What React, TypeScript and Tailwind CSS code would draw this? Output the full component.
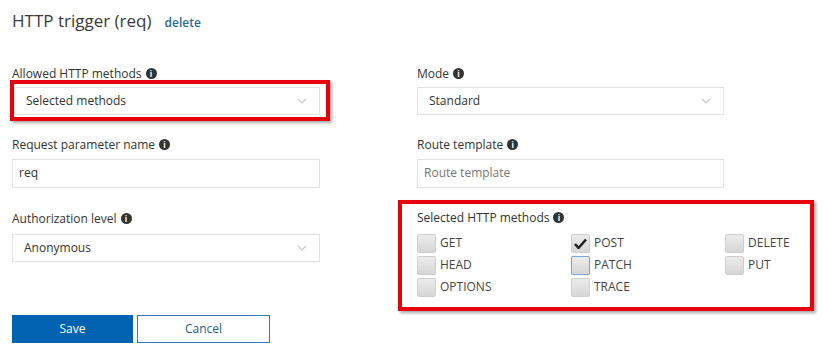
import React from "react";

const FONT = { fontFamily: '"Open Sans", "Noto Sans", "Liberation Sans", sans-serif' };

function Info() {
  return (
    <span className="ml-1 inline-flex h-[11px] w-[11px] items-center justify-center rounded-full bg-[#333] text-[8px] font-bold leading-none text-white">
      i
    </span>
  );
}

function Label({ children }: { children: React.ReactNode }) {
  return (
    <div className="flex h-4 items-center text-[12px] text-[#333]">
      {children}
      <Info />
    </div>
  );
}

function Chevron() {
  return (
    <svg width={10} height={6} viewBox="0 0 10 6" fill="none" stroke="#c8c8c8" strokeWidth={1.2}>
      <path d="M1 1l4 4 4-4" />
    </svg>
  );
}

function Select({ value }: { value: string }) {
  return (
    <div className="flex h-[28px] items-center justify-between border border-[#e3e3e3] bg-white pl-[11px] pr-[12px] text-[12px] text-[#333]">
      <span>{value}</span>
      <Chevron />
    </div>
  );
}

function TextInput({ value, placeholder }: { value?: string; placeholder?: string }) {
  return (
    <div className="flex h-[29px] items-center border border-[#e3e3e3] bg-white px-[6px] text-[12px]">
      {value ? <span className="text-[#333]">{value}</span> : <span className="text-[#777]">{placeholder}</span>}
    </div>
  );
}

function Check({ label, checked, focus }: { label: string; checked?: boolean; focus?: boolean }) {
  return (
    <div className="flex h-[19px] items-center">
      <span
        className={
          "flex h-[19px] w-[19px] items-center justify-center rounded-[2px] border bg-gradient-to-b from-[#ececec] to-[#d6d6d6] " +
          (focus ? "border-[#7fa5d8] shadow-[0_0_1px_#7fa5d8]" : "border-[#cfcfcf]")
        }
      >
        {checked && (
          <svg width={13} height={11} viewBox="0 0 13 11">
            <path d="M1 6l3.5 4L12 1.5" fill="none" stroke="#222" strokeWidth={2.6} strokeLinejoin="round" />
          </svg>
        )}
      </span>
      <span className="ml-[4px] text-[12px] text-[#444]">{label}</span>
    </div>
  );
}

export default function App() {
  return (
    <div className="relative h-[352px] w-[828px] overflow-hidden bg-white" style={FONT}>
      <div className="flex items-baseline pl-[12px] pt-[8px]">
        <span className="text-[17px] text-[#3a3a3a]">HTTP trigger (req)</span>
        <span className="ml-[13px] text-[12px] font-semibold text-[#2a6a96]">delete</span>
      </div>

      <div className="mt-[32px] flex pl-[12px]">
        <div className="flex w-[308px] flex-col">
          <Label>Allowed HTTP methods</Label>
          <div className="mt-[5px] pl-[2px]">
            <Select value="Selected methods" />
          </div>
          <div className="mt-[22px]">
            <Label>Request parameter name</Label>
          </div>
          <div className="mt-[6px]">
            <TextInput value="req" />
          </div>
          <div className="mt-[23px]">
            <Label>Authorization level</Label>
          </div>
          <div className="mt-[7px]">
            <Select value="Anonymous" />
          </div>
          <div className="mt-[53px] flex gap-[4px]">
            <button className="h-[28px] w-[121px] bg-[#0063b1] text-[12px] text-white">Save</button>
            <button className="h-[28px] w-[133px] border border-[#3b78b5] bg-white text-[12px] text-[#1f5a8c]">
              Cancel
            </button>
          </div>
        </div>

        <div className="ml-[97px] flex w-[307px] flex-col">
          <Label>Mode</Label>
          <div className="mt-[5px]">
            <Select value="Standard" />
          </div>
          <div className="mt-[22px]">
            <Label>Route template</Label>
          </div>
          <div className="mt-[6px]">
            <TextInput placeholder="Route template" />
          </div>
          <div className="mt-[22px]">
            <Label>Selected HTTP methods</Label>
          </div>
          <div className="mt-[8px] grid w-[390px] grid-cols-[154px_154px_82px] gap-y-[3px]">
            <Check label="GET" />
            <Check label="POST" checked />
            <Check label="DELETE" />
            <Check label="HEAD" />
            <Check label="PATCH" focus />
            <Check label="PUT" />
            <Check label="OPTIONS" />
            <Check label="TRACE" />
          </div>
        </div>
      </div>

      {/* red annotation boxes */}
      <div className="pointer-events-none absolute left-[10px] top-[80px] h-[41px] w-[320px] border-[4px] border-[#e8000b] shadow-[2px_2px_3px_rgba(0,0,0,0.35)]" />
      <div className="pointer-events-none absolute left-[398px] top-[200px] h-[111px] w-[416px] border-[4px] border-[#e8000b] shadow-[2px_2px_3px_rgba(0,0,0,0.35)]" />
    </div>
  );
}
